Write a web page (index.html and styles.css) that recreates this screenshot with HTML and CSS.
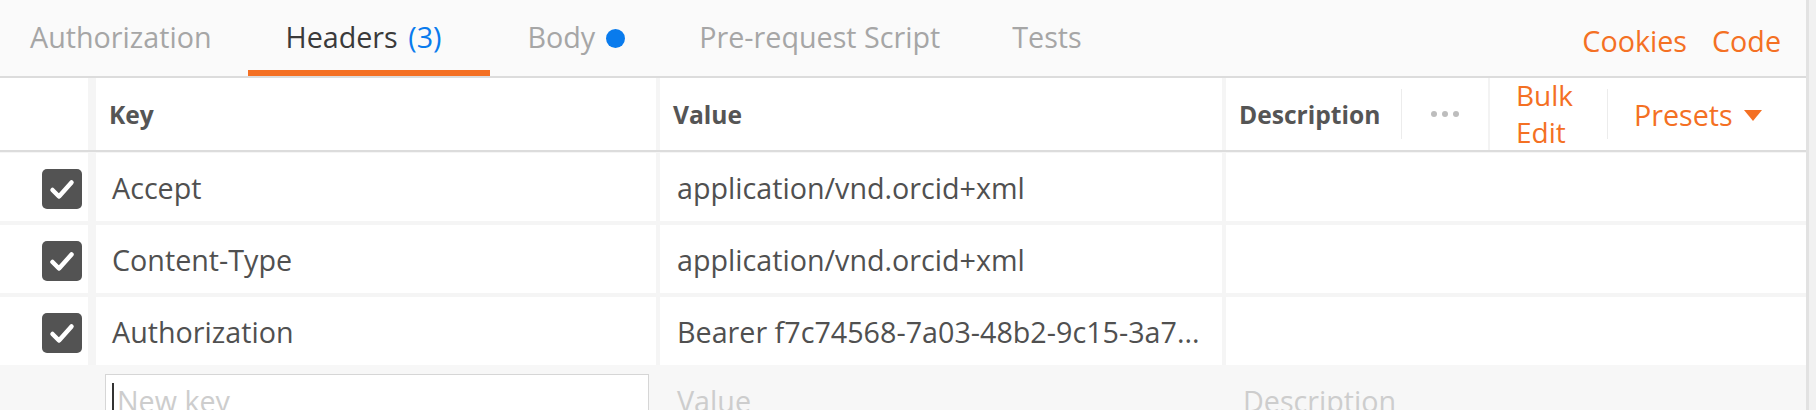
FILE: index.html
```html
<!DOCTYPE html>
<html>
<head>
<meta charset="utf-8">
<link rel="stylesheet" href="styles.css">
</head>
<body>
<div class="app">
  <div class="main">
    <div class="tabbar">
      <div class="tabs">
        <div class="tab first">Authorization</div>
        <div class="tab active">Headers <span class="count">(3)</span></div>
        <div class="tab">Body<span class="dot"></span></div>
        <div class="tab narrow">Pre-request Script</div>
        <div class="tab">Tests</div>
      </div>
      <div class="actions"><span>Cookies</span><span>Code</span></div>
    </div>
    <div class="table">
      <div class="row head">
        <div class="cell c-check"></div>
        <div class="cell c-key">Key</div>
        <div class="cell c-value">Value</div>
        <div class="cell c-desc">
          <div class="desc-label">Description</div>
          <div class="sep"></div>
          <div class="more"><i></i><i></i><i></i></div>
          <div class="divider"></div>
          <div class="bulk">Bulk Edit</div>
          <div class="sep"></div>
          <div class="presets">Presets<span class="caret-down"></span></div>
        </div>
      </div>
      <div class="rows">
        <div class="row">
          <div class="cell c-check"><svg class="cb" width="40" height="40" viewBox="0 0 40 40"><rect width="40" height="40" rx="5" fill="#535353"/><path d="M10.5 21 L17 27.5 L29.5 13.5" fill="none" stroke="#fff" stroke-width="4.5" stroke-linecap="round" stroke-linejoin="round"/></svg></div>
          <div class="cell c-key">Accept</div>
          <div class="cell c-value">application/vnd.orcid+xml</div>
          <div class="cell c-desc"></div>
        </div>
        <div class="row">
          <div class="cell c-check"><svg class="cb" width="40" height="40" viewBox="0 0 40 40"><rect width="40" height="40" rx="5" fill="#535353"/><path d="M10.5 21 L17 27.5 L29.5 13.5" fill="none" stroke="#fff" stroke-width="4.5" stroke-linecap="round" stroke-linejoin="round"/></svg></div>
          <div class="cell c-key">Content-Type</div>
          <div class="cell c-value">application/vnd.orcid+xml</div>
          <div class="cell c-desc"></div>
        </div>
        <div class="row">
          <div class="cell c-check"><svg class="cb" width="40" height="40" viewBox="0 0 40 40"><rect width="40" height="40" rx="5" fill="#535353"/><path d="M10.5 21 L17 27.5 L29.5 13.5" fill="none" stroke="#fff" stroke-width="4.5" stroke-linecap="round" stroke-linejoin="round"/></svg></div>
          <div class="cell c-key">Authorization</div>
          <div class="cell c-value">Bearer f7c74568-7a03-48b2-9c15-3a7...</div>
          <div class="cell c-desc"></div>
        </div>
      </div>
      <div class="row newrow">
        <div class="ncell n-check"></div>
        <div class="ncell n-key"><div class="newkey"><span class="cursor"></span><span class="ph">New key</span></div></div>
        <div class="ncell n-value"><span class="ph">Value</span></div>
        <div class="ncell n-desc"><span class="ph">Description</span></div>
      </div>
    </div>
  </div>
  <div class="scroll"></div>
</div>
</body>
</html>
```
FILE: styles.css
```css
* { box-sizing: border-box; }
html, body { margin: 0; padding: 0; }
body {
  width: 1816px;
  height: 410px;
  overflow: hidden;
  background: #ffffff;
  font-family: "Open Sans", "Noto Sans", sans-serif;
  font-size: 28.7px;
  color: #505050;
}
.app { display: flex; height: 410px; }
.main { width: 1806px; display: flex; flex-direction: column; }
.scroll { flex: 1; background: #f1f1f1; border-left: 3px solid #e2e2e2; }

.tabbar {
  height: 78px;
  background: #fafafa;
  border-bottom: 2px solid #dcdcdc;
  display: flex;
  justify-content: space-between;
}
.tabs { display: flex; }
.tab {
  height: 76px;
  padding: 17px 37px 0 37px;
  color: #a6a6a6;
  white-space: nowrap;
  line-height: 40px;
}
.tab.first { padding-left: 30px; }
.tab.active {
  color: #3a3a3a;
  border-bottom: 6px solid #f47023;
  padding-right: 48px;
}
.tab.active + .tab { padding-left: 38px; }
.tab.narrow { padding-left: 37px; padding-right: 35px; }
.count { color: #097bed; margin-left: 3px; }
.dot {
  display: inline-block;
  width: 19px;
  height: 19px;
  border-radius: 50%;
  background: #097bed;
  margin-left: 11px;
  vertical-align: baseline;
}
.actions {
  display: flex;
  gap: 25px;
  padding: 21px 25px 0 0;
  line-height: 40px;
  color: #f47023;
}

.table { flex: 1; background: #f5f5f5; display: flex; flex-direction: column; }
.row { display: flex; background: #f5f5f5; }
.cell {
  background: #ffffff;
  display: flex;
  align-items: center;
  white-space: nowrap;
}
.c-check { width: 88px; }
.c-key { width: 560px; margin-left: 8px; padding-left: 16px; }
.c-value { width: 562px; margin-left: 4px; padding-left: 17px; }
.c-desc { flex: 1; margin-left: 4px; }

.head {
  height: 74px;
  border-bottom: 2px solid #dcdcdc;
  margin-bottom: 1px;
}
.head .cell {
  font-weight: 700;
  font-size: 24.6px;
  color: #555555;
}
.head .c-key, .head .c-value { padding-left: 13px; }
.desc-label { width: 175px; flex-shrink: 0; padding-left: 13px; }
.sep { width: 1px; height: 50px; flex-shrink: 0; background: #ececec; }
.more {
  width: 86px;
  flex-shrink: 0;
  display: flex;
  justify-content: center;
  gap: 5px;
}
.more i { width: 6px; height: 6px; border-radius: 50%; background: #bdbdbd; }
.divider { width: 2px; flex-shrink: 0; align-self: stretch; background: #f3f3f3; }
.bulk {
  width: 117px;
  flex-shrink: 0;
  padding: 0 26px;
  white-space: normal;
  font-weight: 400;
  font-size: 28px;
  line-height: 37px;
  color: #f47023;
}
.presets {
  flex: 1;
  padding-left: 26px;
  font-weight: 400;
  font-size: 28.7px;
  color: #f47023;
  display: flex;
  align-items: center;
}
.caret-down {
  width: 0;
  height: 0;
  margin-left: 11px;
  margin-top: 2px;
  border-left: 9px solid transparent;
  border-right: 9px solid transparent;
  border-top: 11px solid #f47023;
}

.rows { display: flex; flex-direction: column; gap: 4px; }
.rows .row { height: 68px; }
.cb { margin-left: 42px; margin-top: 3px; }

.newrow { flex: 1; background: #f7f7f7; }
.ncell { white-space: nowrap; }
.n-check { width: 88px; }
.n-key { width: 560px; margin-left: 8px; padding: 9px 0 0 9px; }
.n-value { width: 562px; margin-left: 4px; padding: 16px 0 0 17px; }
.n-desc { flex: 1; margin-left: 4px; padding: 16px 0 0 17px; }
.newkey {
  width: 544px;
  height: 50px;
  background: #ffffff;
  border: 1px solid #d6d6d6;
  padding: 6px 0 0 6px;
  display: flex;
  align-items: flex-start;
}
.cursor { width: 2px; height: 34px; margin-top: 2px; background: #333333; margin-right: 3px; }
.ph { color: #cdcdcd; line-height: 40px; }
```
